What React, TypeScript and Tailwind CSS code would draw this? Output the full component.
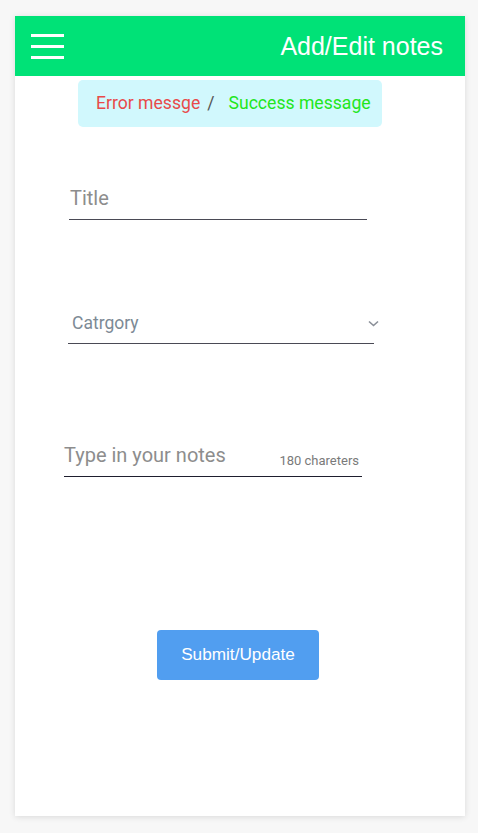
import React from 'react';

export default function App() {
  return (
    <div className="min-h-[833px] bg-[#f7f7f7] pt-4 px-[15px] pb-[17px]" style={{ fontFamily: 'Roboto, sans-serif' }}>
      <div className="bg-white h-[800px] w-[450px] shadow-[0_1px_6px_rgba(0,0,0,0.12)] flex flex-col">
        <header className="h-[60px] shrink-0 bg-[#00e277] flex items-center justify-between pl-4 pr-[22px]">
          <button className="flex flex-col gap-[8px] w-[33px]">
            <span className="block h-[3px] bg-white" />
            <span className="block h-[3px] bg-white" />
            <span className="block h-[3px] bg-white" />
          </button>
          <h1 className="text-white text-[25px] font-['Liberation_Sans',Arial,sans-serif] leading-none">Add/Edit notes</h1>
        </header>

        <div className="ml-[63px] mt-1 w-[304px] h-[47px] shrink-0 rounded-[5px] bg-[#d1f8fd] flex items-center pl-[18px] text-[17.6px]">
          <span className="text-[#e84a4a]">Error messge</span>
          <span className="text-[#555] ml-[7px]">/</span>
          <span className="text-[#22e61c] ml-[14px]">Success message</span>
        </div>

        {/* title */}
        <div className="ml-[54px] mt-[59px] w-[298px] h-[33.5px] shrink-0 border-b-[1.5px] border-[#4a4a55] pl-[1px]">
          <div className="text-[20px] leading-[24px] text-[#8d8d8d]">Title</div>
        </div>

        {/* category */}
        <div className="ml-[53px] mt-[93px] w-[306px] h-[31.5px] shrink-0 border-b-[1.5px] border-[#4a4a55] flex items-start justify-between">
          <span className="text-[17.5px] leading-[20px] text-[#7d8a95] pl-[4px]">Catrgory</span>
          <svg className="mt-[7px] -mr-[5px]" width="11" height="7" viewBox="0 0 11 7" fill="none" stroke="#8a8f98" strokeWidth="1.6">
            <path d="M1 1.5l4.5 4 4.5-4" />
          </svg>
        </div>

        {/* notes */}
        <div className="ml-[49px] mt-[99px] w-[298px] h-[33.5px] shrink-0 border-b-[1.5px] border-[#1e1e2e] flex items-start justify-between pr-[3px]">
          <span className="text-[20px] leading-[24px] text-[#8d8d8d]">Type in your notes</span>
          <span className="text-[13px] leading-[15px] text-[#7a7a7a] mt-[10px]">180 chareters</span>
        </div>

        <div className="flex justify-center mt-[153px]">
          <button className="w-[162px] h-[50px] -ml-[4px] rounded-[4px] bg-[#519ef0] text-white text-[17.2px] font-['Liberation_Sans',Arial,sans-serif]">
            Submit/Update
          </button>
        </div>
      </div>
    </div>
  );
}
